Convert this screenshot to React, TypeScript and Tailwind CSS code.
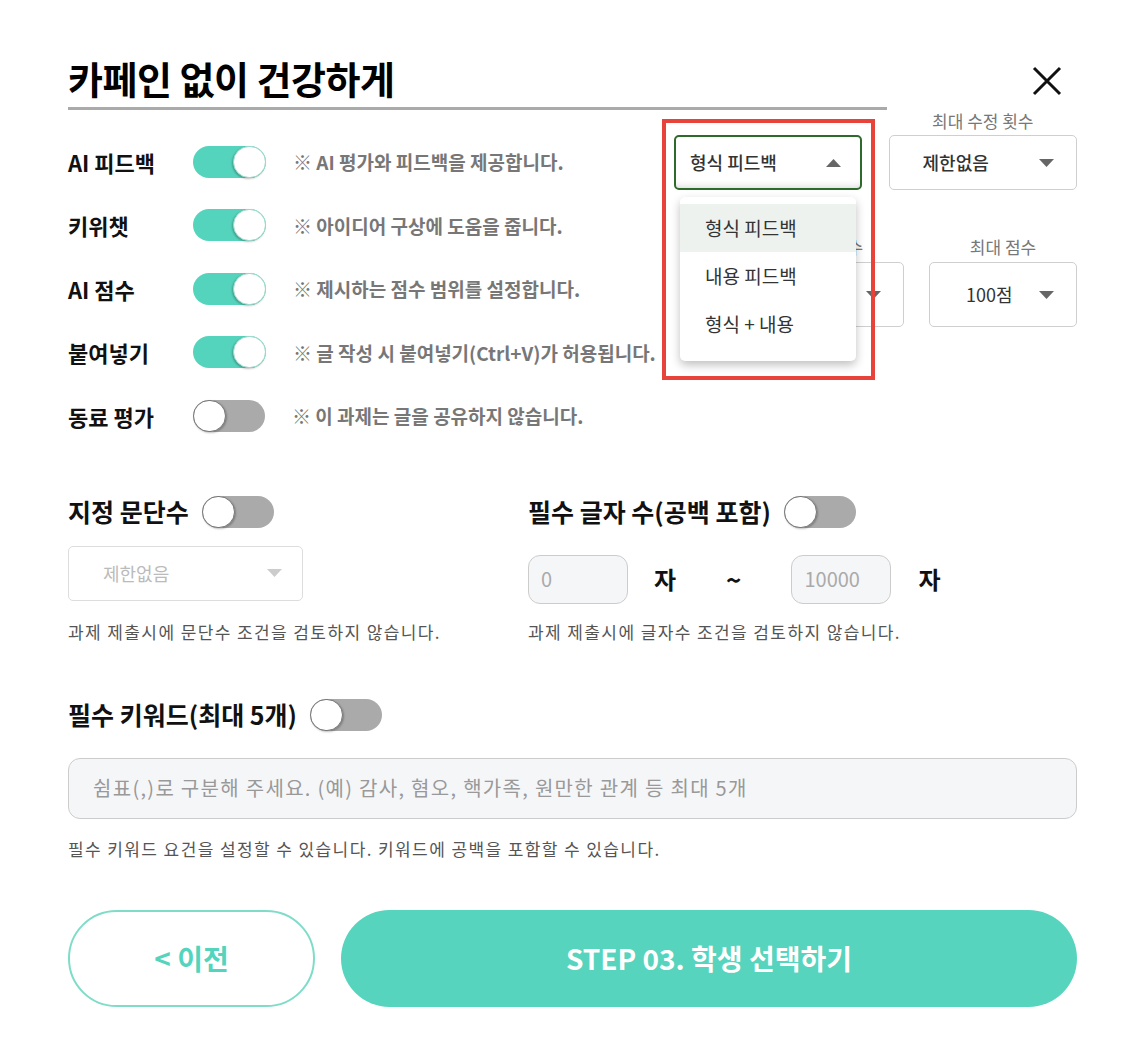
import React from "react";

function Toggle({ on }: { on: boolean }) {
  return (
    <div
      className={
        on
          ? "relative w-[73px] h-[32px] shrink-0 rounded-full bg-[#55d4bd]"
          : "relative w-[72px] h-[32px] shrink-0 rounded-full bg-[#aaaaaa]"
      }
    >
      <div
        className={
          on
            ? "absolute top-0 right-0 w-[33px] h-[32px] rounded-full bg-white border border-[#9fd9cc] shadow-[-1px_1px_2px_rgba(0,0,0,0.25)]"
            : "absolute top-0 left-0 w-[33px] h-[32px] rounded-full bg-white border border-[#777] shadow-[1px_1px_2px_rgba(0,0,0,0.25)]"
        }
      />
    </div>
  );
}

function TriDown({ color = "#666" }: { color?: string }) {
  return (
    <svg width="15" height="8" viewBox="0 0 15 8">
      <polygon points="0,0 15,0 7.5,8" fill={color} />
    </svg>
  );
}

function TriUp({ color = "#666" }: { color?: string }) {
  return (
    <svg width="15" height="8" viewBox="0 0 15 8">
      <polygon points="0,8 15,8 7.5,0" fill={color} />
    </svg>
  );
}

const rows = [
  { label: "AI 피드백", on: true, note: "※ AI 평가와 피드백을 제공합니다." },
  { label: "키위챗", on: true, note: "※ 아이디어 구상에 도움을 줍니다." },
  { label: "AI 점수", on: true, note: "※ 제시하는 점수 범위를 설정합니다." },
  { label: "붙여넣기", on: true, note: "※ 글 작성 시 붙여넣기(Ctrl+V)가 허용됩니다." },
  { label: "동료 평가", on: false, note: "※ 이 과제는 글을 공유하지 않습니다." },
];

export default function App() {
  return (
    <div className="w-[1145px] min-h-[1052px] bg-white font-['Noto_Sans_CJK_KR','Noto_Sans',sans-serif] text-[#111]">
      <div className="px-[68px] pt-[55px]">
        {/* header */}
        <div className="flex items-start">
          <div className="w-[819px] border-b-[3px] border-[#aaaaaa] pb-[6px]">
            <h1 className="text-[38px] font-bold leading-[46px] tracking-[-0.5px] text-black">
              카페인 없이 건강하게
            </h1>
          </div>
          <button className="ml-auto mt-[10px] mr-[14px]">
            <svg width="32" height="32" viewBox="0 0 32 32">
              <path d="M3 3 L29 29 M29 3 L3 29" stroke="#111" strokeWidth="3" fill="none" />
            </svg>
          </button>
        </div>

        {/* top section */}
        <div className="flex">
          <div className="flex flex-col pt-[20px]">
            {rows.map((r) => (
              <div key={r.label} className="flex items-center h-[63.5px]">
                <span className="w-[125px] text-[22px] font-bold leading-none text-[#111]">{r.label}</span>
                <Toggle on={r.on} />
                <span className="ml-[27px] text-[19px] font-bold text-[#777] leading-none">{r.note}</span>
              </div>
            ))}
          </div>

          <div className="ml-auto w-[403px] pt-[1px] relative">
            <div className="flex items-end gap-[27px]">
              <div className="w-[188px] h-[55px] rounded-[5px] border-2 border-[#2e6a2b] flex items-center justify-between pl-[14px] pr-[19px] shadow-[inset_0_-8px_8px_-8px_rgba(0,0,0,0.2)]">
                <span className="text-[18px] text-[#333] font-medium">형식 피드백</span>
                <TriUp />
              </div>
              <div className="w-[189px] flex flex-col items-center">
                <span className="text-[17px] leading-[20px] text-[#777] mb-[4px]">최대 수정 횟수</span>
                <div className="w-full h-[55px] rounded-[5px] border border-[#cfcfcf] flex items-center justify-between pl-[33px] pr-[22px]">
                  <span className="text-[18px] text-[#333] font-medium">제한없음</span>
                  <TriDown />
                </div>
              </div>
            </div>
            <div className="flex justify-end gap-[25px] mt-[47px]">
              <div className="w-[148px] flex flex-col items-center">
                <span className="text-[17px] leading-[20px] text-[#777] mb-[5px]">최소 점수</span>
                <div className="w-full h-[65px] rounded-[5px] border border-[#cfcfcf] flex items-center justify-between pl-[36px] pr-[22px]">
                  <span className="text-[18px] text-[#333]">0점</span>
                  <TriDown />
                </div>
              </div>
              <div className="w-[148px] flex flex-col items-center">
                <span className="text-[17px] leading-[20px] text-[#777] mb-[5px]">최대 점수</span>
                <div className="w-full h-[65px] rounded-[5px] border border-[#cfcfcf] flex items-center justify-between pl-[36px] pr-[22px]">
                  <span className="text-[18px] text-[#333]">100점</span>
                  <TriDown />
                </div>
              </div>
            </div>

            {/* open dropdown menu */}
            <div className="absolute left-[6px] top-[87px] w-[176px] rounded-[5px] bg-white pt-[7px] pb-[13px] shadow-[0_4px_10px_rgba(0,0,0,0.25)]">
              <div className="h-[48px] flex items-center pl-[25px] bg-[#eef2ee] text-[19px] text-[#333]">형식 피드백</div>
              <div className="h-[48px] flex items-center pl-[25px] text-[19px] text-[#333]">내용 피드백</div>
              <div className="h-[48px] flex items-center pl-[25px] text-[19px] text-[#333]">형식 + 내용</div>
            </div>
            {/* annotation frame */}
            <div className="absolute left-[-12px] top-[9px] w-[213px] h-[261px] border-4 border-[#e8433a] pointer-events-none" />
          </div>
        </div>

        {/* section 2 */}
        <div className="grid grid-cols-[460px_1fr] mt-[48px]">
          <div className="flex flex-col">
            <div className="flex items-center h-[32px] gap-[13px]">
              <span className="text-[25px] font-bold leading-none">지정 문단수</span>
              <Toggle on={false} />
            </div>
            <div className="mt-[18px] w-[235px] h-[55px] rounded-[5px] border border-[#dddddd] flex items-center justify-between pl-[34px] pr-[20px]">
              <span className="text-[18px] text-[#bbbbbb]">제한없음</span>
              <TriDown color="#cccccc" />
            </div>
            <p className="mt-[20px] text-[17px] leading-[22px] text-[#555] tracking-[1.4px]">
              과제 제출시에 문단수 조건을 검토하지 않습니다.
            </p>
          </div>
          <div className="flex flex-col">
            <div className="flex items-center h-[32px] gap-[13px]">
              <span className="text-[25px] font-bold leading-none">필수 글자 수(공백 포함)</span>
              <Toggle on={false} />
            </div>
            <div className="mt-[27px] flex items-center h-[49px]">
              <div className="w-[100px] h-[49px] rounded-[12px] border border-[#cccccc] bg-[#f5f6f8] flex items-center pl-[12px] text-[20px] text-[#aaaaaa]">
                0
              </div>
              <span className="ml-[26px] text-[24px] font-bold">자</span>
              <span className="ml-[50px] text-[26px] font-bold leading-none">~</span>
              <div className="ml-[50px] w-[100px] h-[49px] rounded-[12px] border border-[#cccccc] bg-[#f5f6f8] flex items-center pl-[12px] text-[20px] text-[#aaaaaa]">
                10000
              </div>
              <span className="ml-[27px] text-[24px] font-bold">자</span>
            </div>
            <p className="mt-[17px] text-[17px] leading-[22px] text-[#555] tracking-[1.4px]">
              과제 제출시에 글자수 조건을 검토하지 않습니다.
            </p>
          </div>
        </div>

        {/* section 3 */}
        <div className="mt-[56px] flex items-center h-[32px] gap-[13px]">
          <span className="text-[25px] font-bold leading-none">필수 키워드(최대 5개)</span>
          <Toggle on={false} />
        </div>
        <div className="mt-[27px] h-[61px] rounded-[12px] border border-[#cccccc] bg-[#f5f6f8] flex items-center pl-[24px]">
          <span className="text-[20px] tracking-[1.3px] text-[#999999]">쉼표(,)로 구분해 주세요. (예) 감사, 혐오, 핵가족, 원만한 관계 등 최대 5개</span>
        </div>
        <p className="mt-[19px] text-[17px] leading-[22px] text-[#555] tracking-[1.4px]">
          필수 키워드 요건을 설정할 수 있습니다. 키워드에 공백을 포함할 수 있습니다.
        </p>

        {/* buttons */}
        <div className="mt-[50px] flex gap-[26px]">
          <button className="w-[247px] h-[97px] rounded-full border-2 border-[#7fdcc9] bg-white text-[28px] font-bold text-[#55d4bd]">
            &lt; 이전
          </button>
          <button className="flex-1 h-[97px] rounded-full bg-[#56d4bd] text-[28px] font-bold text-white">
            STEP 03. 학생 선택하기
          </button>
        </div>
      </div>
    </div>
  );
}
